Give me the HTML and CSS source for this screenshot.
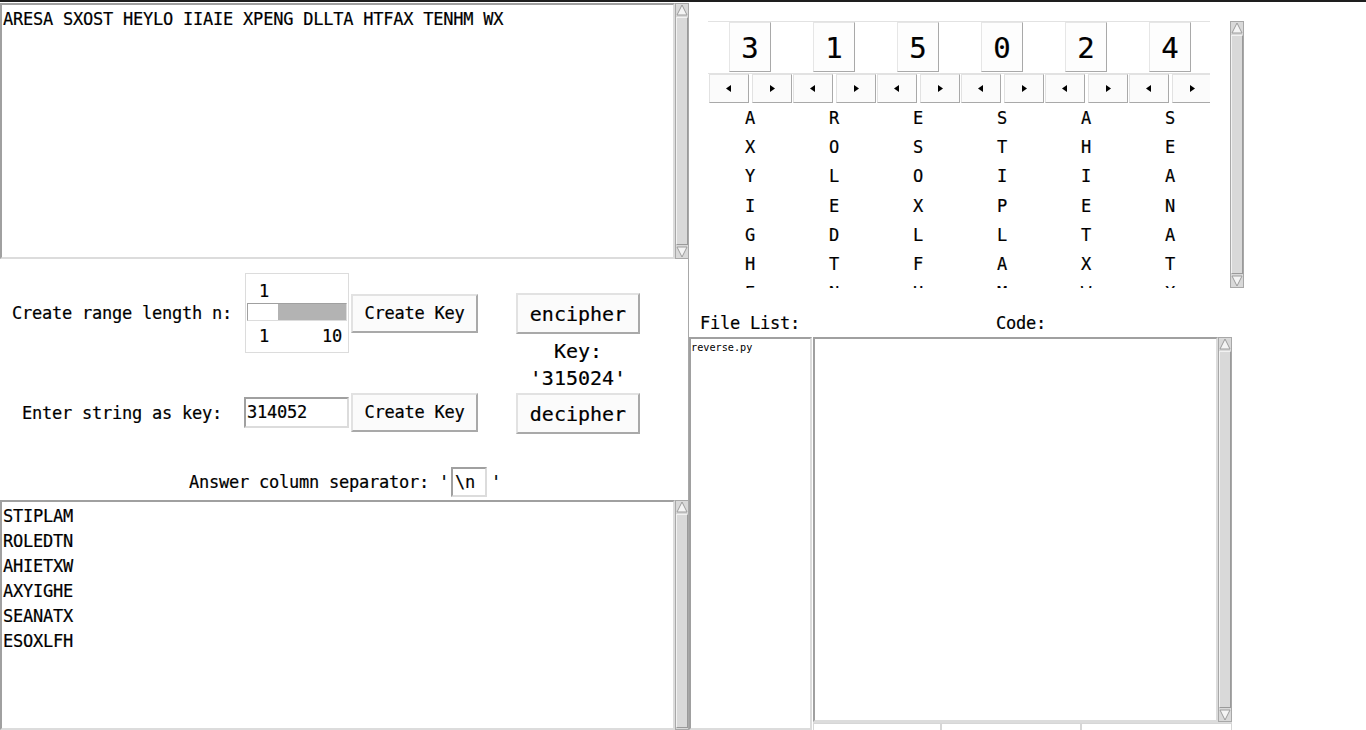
FILE: index.html
```html
<!DOCTYPE html>
<html>
<head>
<meta charset="utf-8">
<link rel="stylesheet" href="styles.css">
</head>
<body>
<div class="app">
  <div class="left">
    <div class="textbox tb-top">
      <div class="textarea ta-top">ARESA SXOST HEYLO IIAIE XPENG DLLTA HTFAX TENHM WX</div>
      <div class="vscroll">
        <div class="sb-arrow"><svg width="12" height="12" viewBox="0 0 12 12"><polygon class="tri" points="6,1 11,11 1,11"/></svg></div>
        <div class="sb-thumb"></div>
        <div class="sb-arrow"><svg width="12" height="12" viewBox="0 0 12 12"><polygon class="tri" points="1,1 11,1 6,11"/></svg></div>
      </div>
    </div>

    <div class="controls">
      <div class="ctl-grid">
        <div class="ctl-label r1">Create range length n:</div>
        <div class="scale r1">
          <div class="scale-val">1</div>
          <div class="trough"><div class="trough-fill"></div></div>
          <div class="scale-labels"><span>1</span><span>10</span></div>
        </div>
        <div class="btn-cell r1"><button class="btn">Create Key</button></div>

        <div class="ctl-label r2">Enter string as key:</div>
        <div class="entry-cell r2"><div class="entry">314052</div></div>
        <div class="btn-cell r2"><button class="btn">Create Key</button></div>

        <div class="cipher">
          <button class="btn big">encipher</button>
          <div class="keyinfo">Key:<br>'315024'</div>
          <button class="btn big">decipher</button>
        </div>
      </div>
      <div class="sep-row">
        <span>Answer column separator: '</span><span class="sep-entry">\n</span><span>'</span>
      </div>
    </div>

    <div class="textbox tb-bottom">
      <div class="textarea ta-bottom">STIPLAM<br>ROLEDTN<br>AHIETXW<br>AXYIGHE<br>SEANATX<br>ESOXLFH</div>
      <div class="vscroll">
        <div class="sb-arrow"><svg width="12" height="12" viewBox="0 0 12 12"><polygon class="tri" points="6,1 11,11 1,11"/></svg></div>
        <div class="sb-thumb"></div>
      </div>
    </div>
  </div>

  <div class="right">
    <div class="keys-panel">
      <div class="keys-frame">
        <div class="kcol">
          <div class="digit-cell"><div class="digit">3</div></div>
          <div class="arrows"><button class="abtn"><svg width="6" height="7" viewBox="0 0 6 7"><polygon points="5,0 5,7 0,3.5"/></svg></button><button class="abtn"><svg width="6" height="7" viewBox="0 0 6 7"><polygon points="1,0 1,7 6,3.5"/></svg></button></div>
          <div class="letters">A<br>X<br>Y<br>I<br>G<br>H<br>E</div>
        </div>
        <div class="kcol">
          <div class="digit-cell"><div class="digit">1</div></div>
          <div class="arrows"><button class="abtn"><svg width="6" height="7" viewBox="0 0 6 7"><polygon points="5,0 5,7 0,3.5"/></svg></button><button class="abtn"><svg width="6" height="7" viewBox="0 0 6 7"><polygon points="1,0 1,7 6,3.5"/></svg></button></div>
          <div class="letters">R<br>O<br>L<br>E<br>D<br>T<br>N</div>
        </div>
        <div class="kcol">
          <div class="digit-cell"><div class="digit">5</div></div>
          <div class="arrows"><button class="abtn"><svg width="6" height="7" viewBox="0 0 6 7"><polygon points="5,0 5,7 0,3.5"/></svg></button><button class="abtn"><svg width="6" height="7" viewBox="0 0 6 7"><polygon points="1,0 1,7 6,3.5"/></svg></button></div>
          <div class="letters">E<br>S<br>O<br>X<br>L<br>F<br>H</div>
        </div>
        <div class="kcol">
          <div class="digit-cell"><div class="digit">0</div></div>
          <div class="arrows"><button class="abtn"><svg width="6" height="7" viewBox="0 0 6 7"><polygon points="5,0 5,7 0,3.5"/></svg></button><button class="abtn"><svg width="6" height="7" viewBox="0 0 6 7"><polygon points="1,0 1,7 6,3.5"/></svg></button></div>
          <div class="letters">S<br>T<br>I<br>P<br>L<br>A<br>M</div>
        </div>
        <div class="kcol">
          <div class="digit-cell"><div class="digit">2</div></div>
          <div class="arrows"><button class="abtn"><svg width="6" height="7" viewBox="0 0 6 7"><polygon points="5,0 5,7 0,3.5"/></svg></button><button class="abtn"><svg width="6" height="7" viewBox="0 0 6 7"><polygon points="1,0 1,7 6,3.5"/></svg></button></div>
          <div class="letters">A<br>H<br>I<br>E<br>T<br>X<br>W</div>
        </div>
        <div class="kcol">
          <div class="digit-cell"><div class="digit">4</div></div>
          <div class="arrows"><button class="abtn"><svg width="6" height="7" viewBox="0 0 6 7"><polygon points="5,0 5,7 0,3.5"/></svg></button><button class="abtn"><svg width="6" height="7" viewBox="0 0 6 7"><polygon points="1,0 1,7 6,3.5"/></svg></button></div>
          <div class="letters">S<br>E<br>A<br>N<br>A<br>T<br>X</div>
        </div>
      </div>
      <div class="vscroll ks-scroll">
        <div class="sb-arrow"><svg width="12" height="12" viewBox="0 0 12 12"><polygon class="tri" points="6,1 11,11 1,11"/></svg></div>
        <div class="sb-thumb"></div>
        <div class="sb-arrow"><svg width="12" height="12" viewBox="0 0 12 12"><polygon class="tri" points="1,1 11,1 6,11"/></svg></div>
      </div>
    </div>

    <div class="labels-row">
      <span class="lbl-files">File List:</span>
      <span class="lbl-code">Code:</span>
    </div>

    <div class="files-row">
      <div class="filelist">reverse.py</div>
      <div class="code-col">
        <div class="code-main">
          <div class="codebox"></div>
          <div class="vscroll code-scroll">
            <div class="sb-arrow"><svg width="12" height="12" viewBox="0 0 12 12"><polygon class="tri" points="6,1 11,11 1,11"/></svg></div>
            <div class="sb-thumb"></div>
            <div class="sb-arrow"><svg width="12" height="12" viewBox="0 0 12 12"><polygon class="tri" points="1,1 11,1 6,11"/></svg></div>
          </div>
        </div>
        <div class="code-bottom">
          <div class="cb-cell c1"></div>
          <div class="cb-cell c2"></div>
          <div class="cb-cell c3"></div>
        </div>
      </div>
    </div>
  </div>
</div>
</body>
</html>
```

FILE: styles.css
```css
* { box-sizing: border-box; }
html, body { margin: 0; padding: 0; }
body {
  width: 1366px;
  height: 730px;
  overflow: hidden;
  background: #ffffff;
  color: #000;
  font-family: "DejaVu Sans Mono", monospace;
  font-size: 17px;
  letter-spacing: -0.23px;
  -webkit-text-stroke: 0.2px #000;
  border-top: 2px solid #1e1e1e;
}
button { font-family: inherit; color: #000; padding: 0; margin: 0; }

.app { display: flex; height: 728px; }
.left { width: 689px; display: flex; flex-direction: column; flex: none; }
.right { flex: 1; display: flex; flex-direction: column; }

/* text boxes */
.textbox { display: flex; }
.tb-top { margin-top: 1px; height: 256px; }
.tb-bottom { flex: 1; }
.textarea {
  flex: 1;
  border: 2px solid;
  border-color: #a0a0a0 #dcdcdc #dcdcdc #a0a0a0;
  background: #fff;
  white-space: pre;
}
.ta-top { padding: 4px 2px 4px 1px; line-height: 20px; }
.ta-bottom { padding: 2px 2px 2px 1px; line-height: 25px; }

/* scrollbar */
.vscroll {
  width: 14px;
  flex: none;
  display: flex;
  flex-direction: column;
  background: #d9d9d9;
  border: 1px solid #a8a8a8;
}
.sb-arrow { height: 12px; display: flex; align-items: center; justify-content: center; }
.sb-arrow svg { display: block; }
.tri { fill: #f4f4f4; stroke: #9c9c9c; stroke-width: 1; }
.sb-thumb {
  flex: 1;
  margin: 1px 0;
  border: 1px solid;
  border-color: #f2f2f2 #9a9a9a #9a9a9a #f2f2f2;
  background: #d9d9d9;
}

/* controls */
.controls {
  height: 241px;
  border-right: 1px solid #a8a8a8;
  display: flex;
  flex-direction: column;
}
.ctl-grid {
  margin-top: 14px;
  display: grid;
  grid-template-columns: 244px 106px 128px 38px 124px;
  grid-template-rows: 80px 80px;
  row-gap: 19px;
}
.ctl-label { grid-column: 1; display: flex; align-items: center; justify-content: center; }
.r1 { grid-row: 1; }
.r2 { grid-row: 2; }
.ctl-label.r2 { padding-top: 1px; }

.scale {
  grid-column: 2;
  margin-left: 1px;
  width: 104px;
  border: 1px solid #dcdcdc;
  display: flex;
  flex-direction: column;
}
.scale-val { height: 29px; padding: 7px 0 0 13px; line-height: 20px; }
.trough {
  margin-left: 1px;
  width: 100px;
  height: 18px;
  border: 1px solid #a0a0a0;
  border-right-color: #dcdcdc;
  border-bottom-color: #dcdcdc;
  background: #fff;
  display: flex;
  justify-content: flex-end;
}
.trough-fill { width: 68px; background: #b3b3b3; }
.scale-labels {
  margin-top: 5px;
  display: flex;
  justify-content: space-between;
  padding: 0 6px 0 13px;
  line-height: 20px;
}

.btn-cell { grid-column: 3; display: flex; align-items: center; }
.btn {
  background: #fbfbfb;
  border: 2px solid;
  border-color: #e2e2e2 #a9a9a9 #a9a9a9 #e2e2e2;
  font-size: 17px;
  letter-spacing: -0.23px;
}
.btn-cell .btn { margin-left: 1px; width: 127px; height: 39px; }
.entry-cell { grid-column: 2; display: flex; align-items: center; }
.entry {
  width: 105px;
  height: 31px;
  border: 2px solid;
  border-color: #a0a0a0 #dcdcdc #dcdcdc #a0a0a0;
  padding: 3px 1px 0;
  line-height: 20px;
}

.cipher {
  grid-column: 5;
  grid-row: 1 / 3;
  display: flex;
  flex-direction: column;
  padding-top: 20px;
}
.btn.big { height: 41px; width: 124px; font-size: 20px; letter-spacing: 0; }
.keyinfo {
  height: 59px;
  font-size: 20px;
  letter-spacing: 0;
  line-height: 27px;
  text-align: center;
  padding-top: 4px;
}

.sep-row {
  margin-top: 15px;
  display: flex;
  justify-content: center;
  align-items: center;
  height: 30px;
  padding-left: 2px;
}
.sep-entry {
  width: 36px;
  height: 30px;
  margin: 0 4px 0 2px;
  border: 2px solid;
  border-color: #a0a0a0 #dcdcdc #dcdcdc #a0a0a0;
  padding: 3px 0 0 2px;
  line-height: 20px;
}

/* right: key panel */
.keys-panel {
  margin: 19px 0 0 19px;
  height: 267px;
  display: flex;
}
.keys-frame {
  width: 502px;
  height: 267px;
  overflow: hidden;
  display: grid;
  grid-template-columns: repeat(6, 1fr);
  align-content: start;
}
.kcol { display: flex; flex-direction: column; }
.digit-cell {
  height: 53px;
  border-top: 1px solid #e2e2e2;
  border-bottom: 1px solid #e2e2e2;
  display: flex;
  justify-content: center;
  align-items: flex-start;
}
.digit {
  width: 42px;
  height: 50px;
  border: 1px solid;
  border-color: #e6e6e6 #a9a9a9 #a9a9a9 #e6e6e6;
  background: #fdfdfd;
  font-size: 29px;
  letter-spacing: 0;
  line-height: 50px;
  text-align: center;
}
.arrows { display: flex; gap: 3px; padding-left: 1px; height: 29px; }
.abtn {
  width: 40px;
  height: 29px;
  background: #fbfbfb;
  border: 1px solid;
  border-color: #e2e2e2 #a9a9a9 #a9a9a9 #e2e2e2;
  display: flex;
  align-items: center;
  justify-content: center;
}
.abtn svg { display: block; fill: #000; }
.letters { text-align: center; line-height: 29.2px; padding-top: 1px; }
.ks-scroll { margin-left: 20px; height: 267px; }

/* labels */
.labels-row { height: 49px; padding-top: 25px; line-height: 20px; }
.lbl-files { margin-left: 11px; }
.lbl-code { margin-left: 186px; }

/* file / code */
.files-row { flex: 1; display: flex; }
.filelist {
  width: 123px;
  border: 2px solid;
  border-color: #a0a0a0 #dcdcdc #dcdcdc #a0a0a0;
  font-size: 10.2px;
  letter-spacing: 0;
  -webkit-text-stroke: 0;
  line-height: 12px;
  padding: 3px 0 0 0;
}
.code-col { width: 419px; display: flex; flex-direction: column; margin-left: 1px; }
.code-main { height: 385px; display: flex; }
.codebox {
  flex: 1;
  border: 2px solid;
  border-color: #a0a0a0 #dcdcdc #dcdcdc #a0a0a0;
}
.code-bottom { flex: 1; display: flex; border-top: 1px solid #dcdcdc; }
.cb-cell { border: 1px solid #d6d6d6; border-bottom: none; }
.c1 { width: 128px; }
.c2 { width: 140px; }
.c3 { flex: 1; }
```
